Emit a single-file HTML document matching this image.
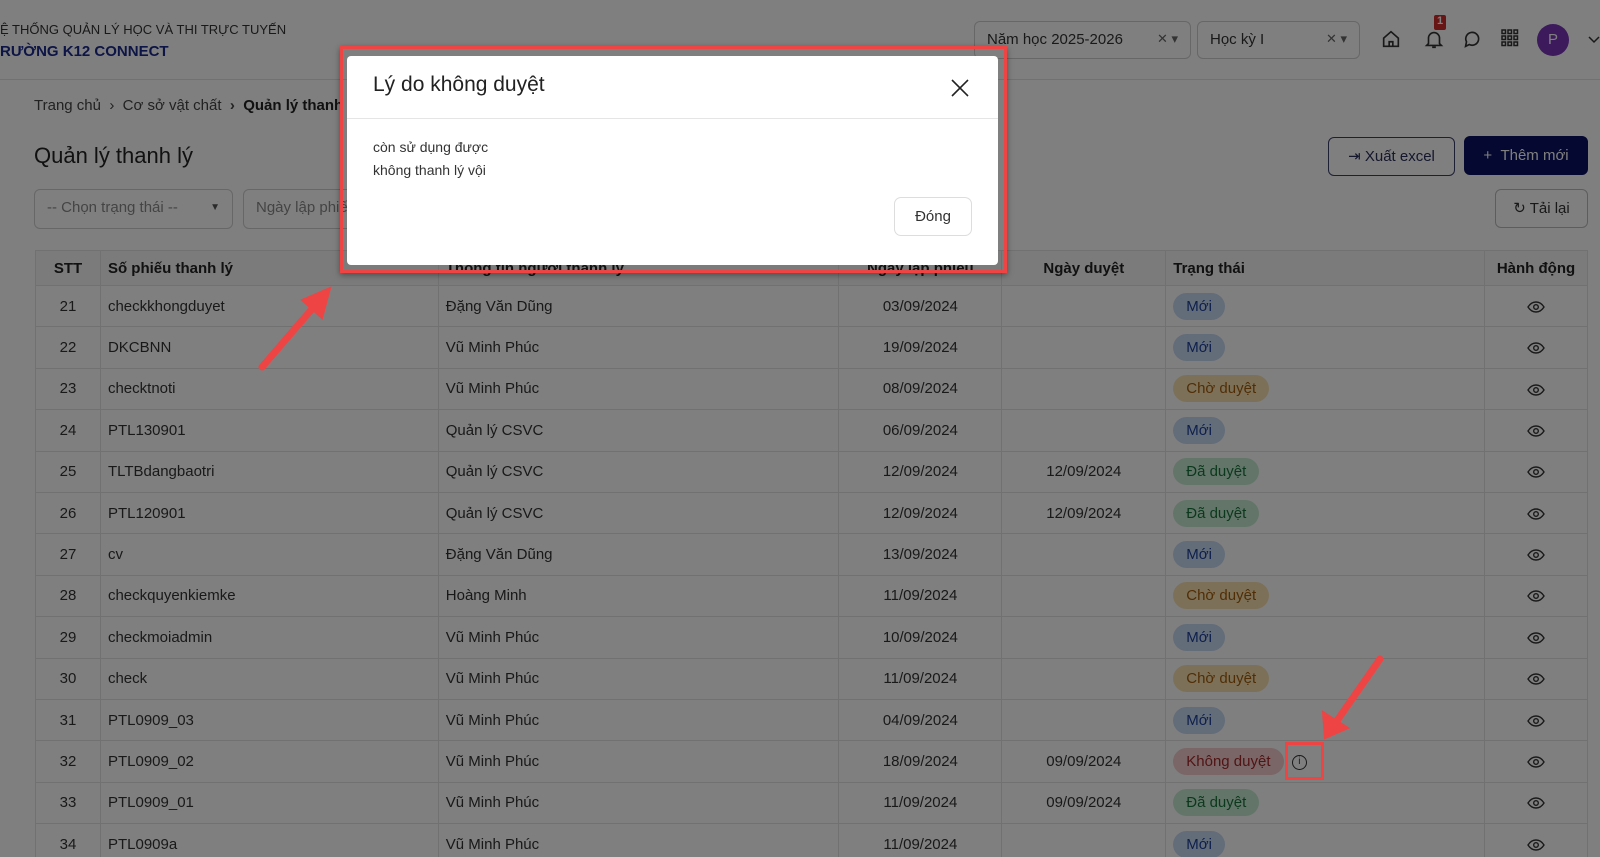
<!DOCTYPE html>
<html style="overflow:hidden"><head><meta charset="utf-8"><style>
*{box-sizing:border-box;margin:0;padding:0}
html,body{width:1600px;height:857px;overflow:hidden}
body{position:relative;background:#fff;font-family:"Liberation Sans","DejaVu Sans",sans-serif;color:#222}
.a{position:absolute}
.hdr{left:0;top:0;width:1600px;height:80px;border-bottom:1px solid #e2e2e2;background:#fff}
.sel{border:1px solid #cfcfcf;border-radius:6px;height:38px;font-size:15px;color:#333;padding:9px 12px;background:#fff}
.btn{border:1px solid #3a3f6b;border-radius:6px;font-size:15px;text-align:center;line-height:37px;height:39px}
table{border-collapse:collapse;font-size:15px;color:#333}
td,th{border:1px solid #e3e3e3;height:41.4px;padding:0 7px;text-align:left;font-weight:normal}
th{height:35px;font-weight:bold;color:#222;background:#f6f6f6}
td.c,th.c{text-align:center}
.b{display:inline-block;border-radius:14px;padding:5px 13px;font-size:15px}
.m{background:#c7d9f3;color:#1e3f9a}.w{background:#f8e3b0;color:#a35a0a}.d{background:#c6ebd2;color:#19733b}.k{background:#f5cccc;color:#a3282a}
.ov{position:fixed;left:0;top:0;width:1600px;height:857px;background:rgba(0,0,0,.5)}
.e{display:inline-block;width:18px;height:12px;vertical-align:middle}
</style></head><body>
<svg width="0" height="0" style="position:absolute"><defs><symbol id="eye" viewBox="0 0 18 12"><path d="M1 6C3.5 2 6 1 9 1s5.5 1 8 5c-2.5 4-5 5-8 5S3.5 10 1 6z" fill="none" stroke="#333" stroke-width="1.4"/><circle cx="9" cy="6" r="2.3" fill="none" stroke="#333" stroke-width="1.4"/></symbol></defs></svg>
<div class="a hdr"></div>
<div class="a" style="left:0;top:22px;font-size:13px;color:#333">Ệ THỐNG QUẢN LÝ HỌC VÀ THI TRỰC TUYẾN</div>
<div class="a" style="left:0;top:43px;font-size:15px;font-weight:bold;color:#1b2a8c">RƯỜNG K12 CONNECT</div>
<div class="a sel" style="left:974px;top:21px;width:217px">Năm học 2025-2026<span style="float:right;color:#666;font-size:13px">✕ ▾</span></div>
<div class="a sel" style="left:1197px;top:21px;width:163px">Học kỳ I<span style="float:right;color:#666;font-size:13px">✕ ▾</span></div>
<svg class="a" style="left:1380px;top:28px" width="22" height="22" viewBox="0 0 24 24" fill="none" stroke="#333" stroke-width="1.8"><path d="M4 11l8-7 8 7v9H4z M10 20v-5h4v5"/></svg>
<svg class="a" style="left:1423px;top:28px" width="22" height="22" viewBox="0 0 24 24" fill="none" stroke="#333" stroke-width="1.8"><path d="M6 17V11a6 6 0 0112 0v6l2 2H4z M10 21h4"/></svg>
<div class="a" style="left:1434px;top:15px;width:12px;height:15px;background:#d02a2a;color:#fff;font-size:11px;text-align:center;font-weight:bold;border-radius:2px">1</div>
<svg class="a" style="left:1461px;top:28px" width="22" height="22" viewBox="0 0 24 24" fill="none" stroke="#333" stroke-width="1.8"><path d="M5 20l1-5a7 7 0 1 1 3 3z"/></svg>
<svg class="a" style="left:1500px;top:28px" width="20" height="20" viewBox="0 0 20 20" fill="none" stroke="#333" stroke-width="1.5"><rect x="2" y="2" width="3.5" height="3.5"/><rect x="8" y="2" width="3.5" height="3.5"/><rect x="14" y="2" width="3.5" height="3.5"/><rect x="2" y="8" width="3.5" height="3.5"/><rect x="8" y="8" width="3.5" height="3.5"/><rect x="14" y="8" width="3.5" height="3.5"/><rect x="2" y="14" width="3.5" height="3.5"/><rect x="8" y="14" width="3.5" height="3.5"/><rect x="14" y="14" width="3.5" height="3.5"/></svg>
<div class="a" style="left:1537px;top:24px;width:32px;height:32px;border-radius:50%;background:#7a34b8;color:#fff;font-size:15px;text-align:center;line-height:32px">P</div>
<svg class="a" style="left:1588px;top:34px" width="12" height="10" viewBox="0 0 12 10" fill="none" stroke="#333" stroke-width="1.5"><path d="M1 3l5 5 5-5"/></svg>

<div class="a" style="left:34px;top:97px;font-size:15px;color:#444">Trang chủ &nbsp;›&nbsp; Cơ sở vật chất &nbsp;<b>›</b>&nbsp; <b style="color:#222">Quản lý thanh lý</b></div>
<div class="a" style="left:34px;top:143px;font-size:22px;color:#222">Quản lý thanh lý</div>
<div class="a sel" style="left:34px;top:189px;width:199px;height:40px;color:#888">-- Chọn trạng thái --<span style="float:right;font-size:10px;color:#555;margin-top:3px">▼</span></div>
<div class="a sel" style="left:243px;top:189px;width:200px;height:40px;color:#888">Ngày lập phiếu</div>
<div class="a btn" style="left:1328px;top:137px;width:127px;color:#2a2f5a">⇥ Xuất excel</div>
<div class="a btn" style="left:1464px;top:136px;width:124px;background:#0a1160;color:#fff;border-color:#0a1160">+ &nbsp;Thêm mới</div>
<div class="a btn" style="left:1495px;top:189px;width:93px;border-color:#bbb;color:#333">↻ Tải lại</div>

<div class="a" style="left:0;top:0;width:1600px;height:857px;overflow:hidden">
<table class="a" style="left:35px;top:250px;width:1553px">
<colgroup><col style="width:65px"><col style="width:338px"><col style="width:401px"><col style="width:163px"><col style="width:164px"><col style="width:319px"><col style="width:103px"></colgroup>
<tr><th class="c">STT</th><th>Số phiếu thanh lý</th><th>Thông tin người thanh lý</th><th class="c">Ngày lập phiếu</th><th class="c">Ngày duyệt</th><th>Trạng thái</th><th class="c">Hành động</th></tr>
<tr><td class="c">21</td><td>checkkhongduyet</td><td>Đặng Văn Dũng</td><td class="c">03/09/2024</td><td></td><td><span class="b m">Mới</span></td><td class="c"><svg class="e"><use href="#eye"/></svg></td></tr>
<tr><td class="c">22</td><td>DKCBNN</td><td>Vũ Minh Phúc</td><td class="c">19/09/2024</td><td></td><td><span class="b m">Mới</span></td><td class="c"><svg class="e"><use href="#eye"/></svg></td></tr>
<tr><td class="c">23</td><td>checktnoti</td><td>Vũ Minh Phúc</td><td class="c">08/09/2024</td><td></td><td><span class="b w">Chờ duyệt</span></td><td class="c"><svg class="e"><use href="#eye"/></svg></td></tr>
<tr><td class="c">24</td><td>PTL130901</td><td>Quản lý CSVC</td><td class="c">06/09/2024</td><td></td><td><span class="b m">Mới</span></td><td class="c"><svg class="e"><use href="#eye"/></svg></td></tr>
<tr><td class="c">25</td><td>TLTBdangbaotri</td><td>Quản lý CSVC</td><td class="c">12/09/2024</td><td class="c">12/09/2024</td><td><span class="b d">Đã duyệt</span></td><td class="c"><svg class="e"><use href="#eye"/></svg></td></tr>
<tr><td class="c">26</td><td>PTL120901</td><td>Quản lý CSVC</td><td class="c">12/09/2024</td><td class="c">12/09/2024</td><td><span class="b d">Đã duyệt</span></td><td class="c"><svg class="e"><use href="#eye"/></svg></td></tr>
<tr><td class="c">27</td><td>cv</td><td>Đặng Văn Dũng</td><td class="c">13/09/2024</td><td></td><td><span class="b m">Mới</span></td><td class="c"><svg class="e"><use href="#eye"/></svg></td></tr>
<tr><td class="c">28</td><td>checkquyenkiemke</td><td>Hoàng Minh</td><td class="c">11/09/2024</td><td></td><td><span class="b w">Chờ duyệt</span></td><td class="c"><svg class="e"><use href="#eye"/></svg></td></tr>
<tr><td class="c">29</td><td>checkmoiadmin</td><td>Vũ Minh Phúc</td><td class="c">10/09/2024</td><td></td><td><span class="b m">Mới</span></td><td class="c"><svg class="e"><use href="#eye"/></svg></td></tr>
<tr><td class="c">30</td><td>check</td><td>Vũ Minh Phúc</td><td class="c">11/09/2024</td><td></td><td><span class="b w">Chờ duyệt</span></td><td class="c"><svg class="e"><use href="#eye"/></svg></td></tr>
<tr><td class="c">31</td><td>PTL0909_03</td><td>Vũ Minh Phúc</td><td class="c">04/09/2024</td><td></td><td><span class="b m">Mới</span></td><td class="c"><svg class="e"><use href="#eye"/></svg></td></tr>
<tr><td class="c">32</td><td>PTL0909_02</td><td>Vũ Minh Phúc</td><td class="c">18/09/2024</td><td class="c">09/09/2024</td><td><span class="b k">Không duyệt</span> &nbsp;<span style="display:inline-block;width:15px;height:15px;border:1.5px solid #333;border-radius:50%;font-size:10px;text-align:center;line-height:12px;vertical-align:middle">i</span></td><td class="c"><svg class="e"><use href="#eye"/></svg></td></tr>
<tr><td class="c">33</td><td>PTL0909_01</td><td>Vũ Minh Phúc</td><td class="c">11/09/2024</td><td class="c">09/09/2024</td><td><span class="b d">Đã duyệt</span></td><td class="c"><svg class="e"><use href="#eye"/></svg></td></tr>
<tr><td class="c">34</td><td>PTL0909a</td><td>Vũ Minh Phúc</td><td class="c">11/09/2024</td><td></td><td><span class="b m">Mới</span></td><td class="c"><svg class="e"><use href="#eye"/></svg></td></tr>
</table>
</div>

<div class="ov"></div>

<div class="a" style="left:340px;top:46px;width:667px;height:227px;border:3px solid #ee4444;box-shadow:0 2px 6px rgba(0,0,0,.4)"></div>
<div class="a" style="left:347px;top:56px;width:651px;height:209px;background:#fff;border-radius:4px">
<div style="height:63px;border-bottom:1px solid #e5e5e5;padding:17px 26px;font-size:21px;color:#222">Lý do không duyệt</div>
<svg class="a" style="left:604px;top:23px" width="18" height="18" viewBox="0 0 18 18" stroke="#222" stroke-width="1.6"><path d="M1 1l16 16M17 1L1 17"/></svg>
<div style="padding:17px 26px;font-size:14px;line-height:23px;color:#333">còn sử dụng được<br>không thanh lý vội</div>
<div class="a" style="left:547px;top:141px;width:78px;height:39px;border:1px solid #ddd;border-radius:7px;text-align:center;line-height:37px;font-size:15px;color:#333">Đóng</div>
</div>

<div class="a" style="left:1285px;top:742px;width:39px;height:38px;border:3px solid #ee4444"></div>
<svg class="a" style="left:0;top:0" width="1600" height="857"><g fill="#ef4444" stroke="#ef4444" stroke-linecap="round" stroke-width="7">
<line x1="262" y1="367" x2="318" y2="302"/><polygon stroke-width="2" points="330,288 302,300 322,318"/>
<line x1="1380" y1="659" x2="1336" y2="722"/><polygon stroke-width="2" points="1325,738 1323,712 1348,728"/></g></svg>
</body></html>
